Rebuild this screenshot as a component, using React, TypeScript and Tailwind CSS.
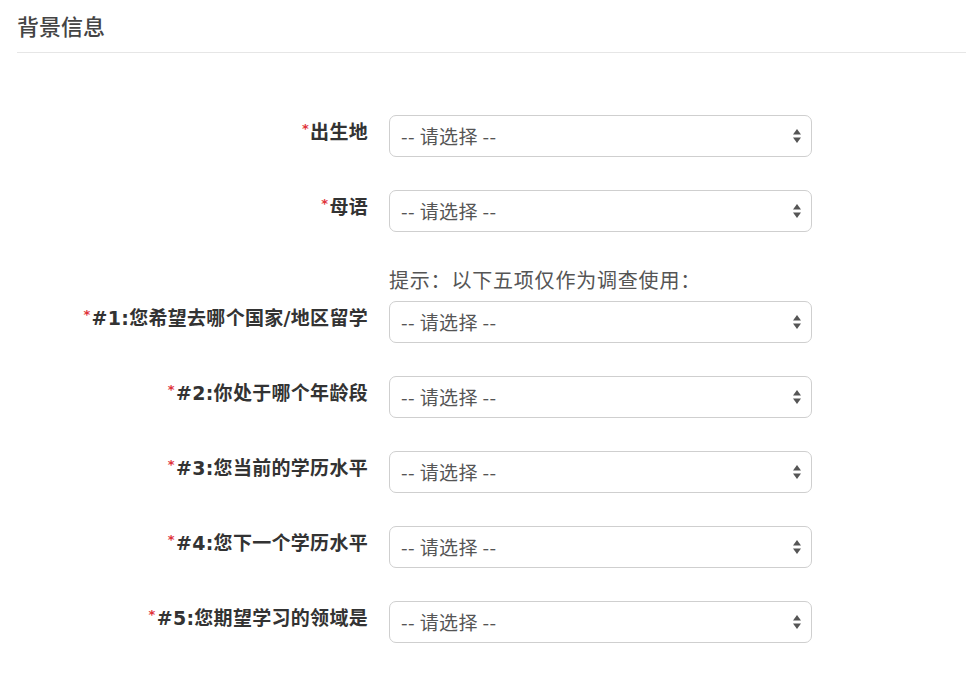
import React from "react";

const rows = [
  { label: "出生地" },
  { label: "母语" },
  { label: "#1:您希望去哪个国家/地区留学", hint: "提示：以下五项仅作为调查使用：" },
  { label: "#2:你处于哪个年龄段" },
  { label: "#3:您当前的学历水平" },
  { label: "#4:您下一个学历水平" },
  { label: "#5:您期望学习的领域是" },
];

const Arrows = () => (
  <svg width="10" height="16" viewBox="0 0 10 16" className="text-[#555]">
    <path d="M5 1 L9 6.5 L1 6.5 Z" fill="currentColor" />
    <path d="M5 15 L9 9.5 L1 9.5 Z" fill="currentColor" />
  </svg>
);

const SelectBox = () => (
  <div className="flex h-[42px] w-[423px] items-center justify-between rounded-[7px] border border-[#cfcfcf] bg-white pl-[11px] pr-[9px] text-[19px] tracking-[0.4px] text-[#555]">
    <span>-- 请选择 --</span>
    <Arrows />
  </div>
);

export default function App() {
  return (
    <div
      className="min-h-screen bg-white pl-[17px]"
      style={{ fontFamily: '"Noto Sans CJK SC", "Noto Sans", sans-serif' }}
    >
      <div className="pt-[10px]">
        <h2 className="text-[22px] leading-[30px] font-medium text-[#444]">背景信息</h2>
        <div className="mt-[12px] h-px bg-[#e6e6e6]" />
      </div>

      <div className="mt-[62px] flex flex-col gap-[33px]">
        {rows.map((r) => (
          <div key={r.label} className="flex flex-col">
            {r.hint && (
              <div className="ml-[372px] mb-[7px] text-[20px] leading-[29px] tracking-[0.8px] text-[#555]">{r.hint}</div>
            )}
            <div className="flex items-start gap-[21px]">
              <div className="w-[351px] pt-[4px] text-right text-[19px] leading-[27px] font-bold tracking-[0.3px] whitespace-nowrap text-[#333] font-['DejaVu_Sans','Noto_Sans_CJK_SC',sans-serif]">
                <span className="relative top-[-6px] mr-[1px] text-[13px] text-[#e0333a]">*</span>
                {r.label}
              </div>
              <SelectBox />
            </div>
          </div>
        ))}
      </div>
    </div>
  );
}
